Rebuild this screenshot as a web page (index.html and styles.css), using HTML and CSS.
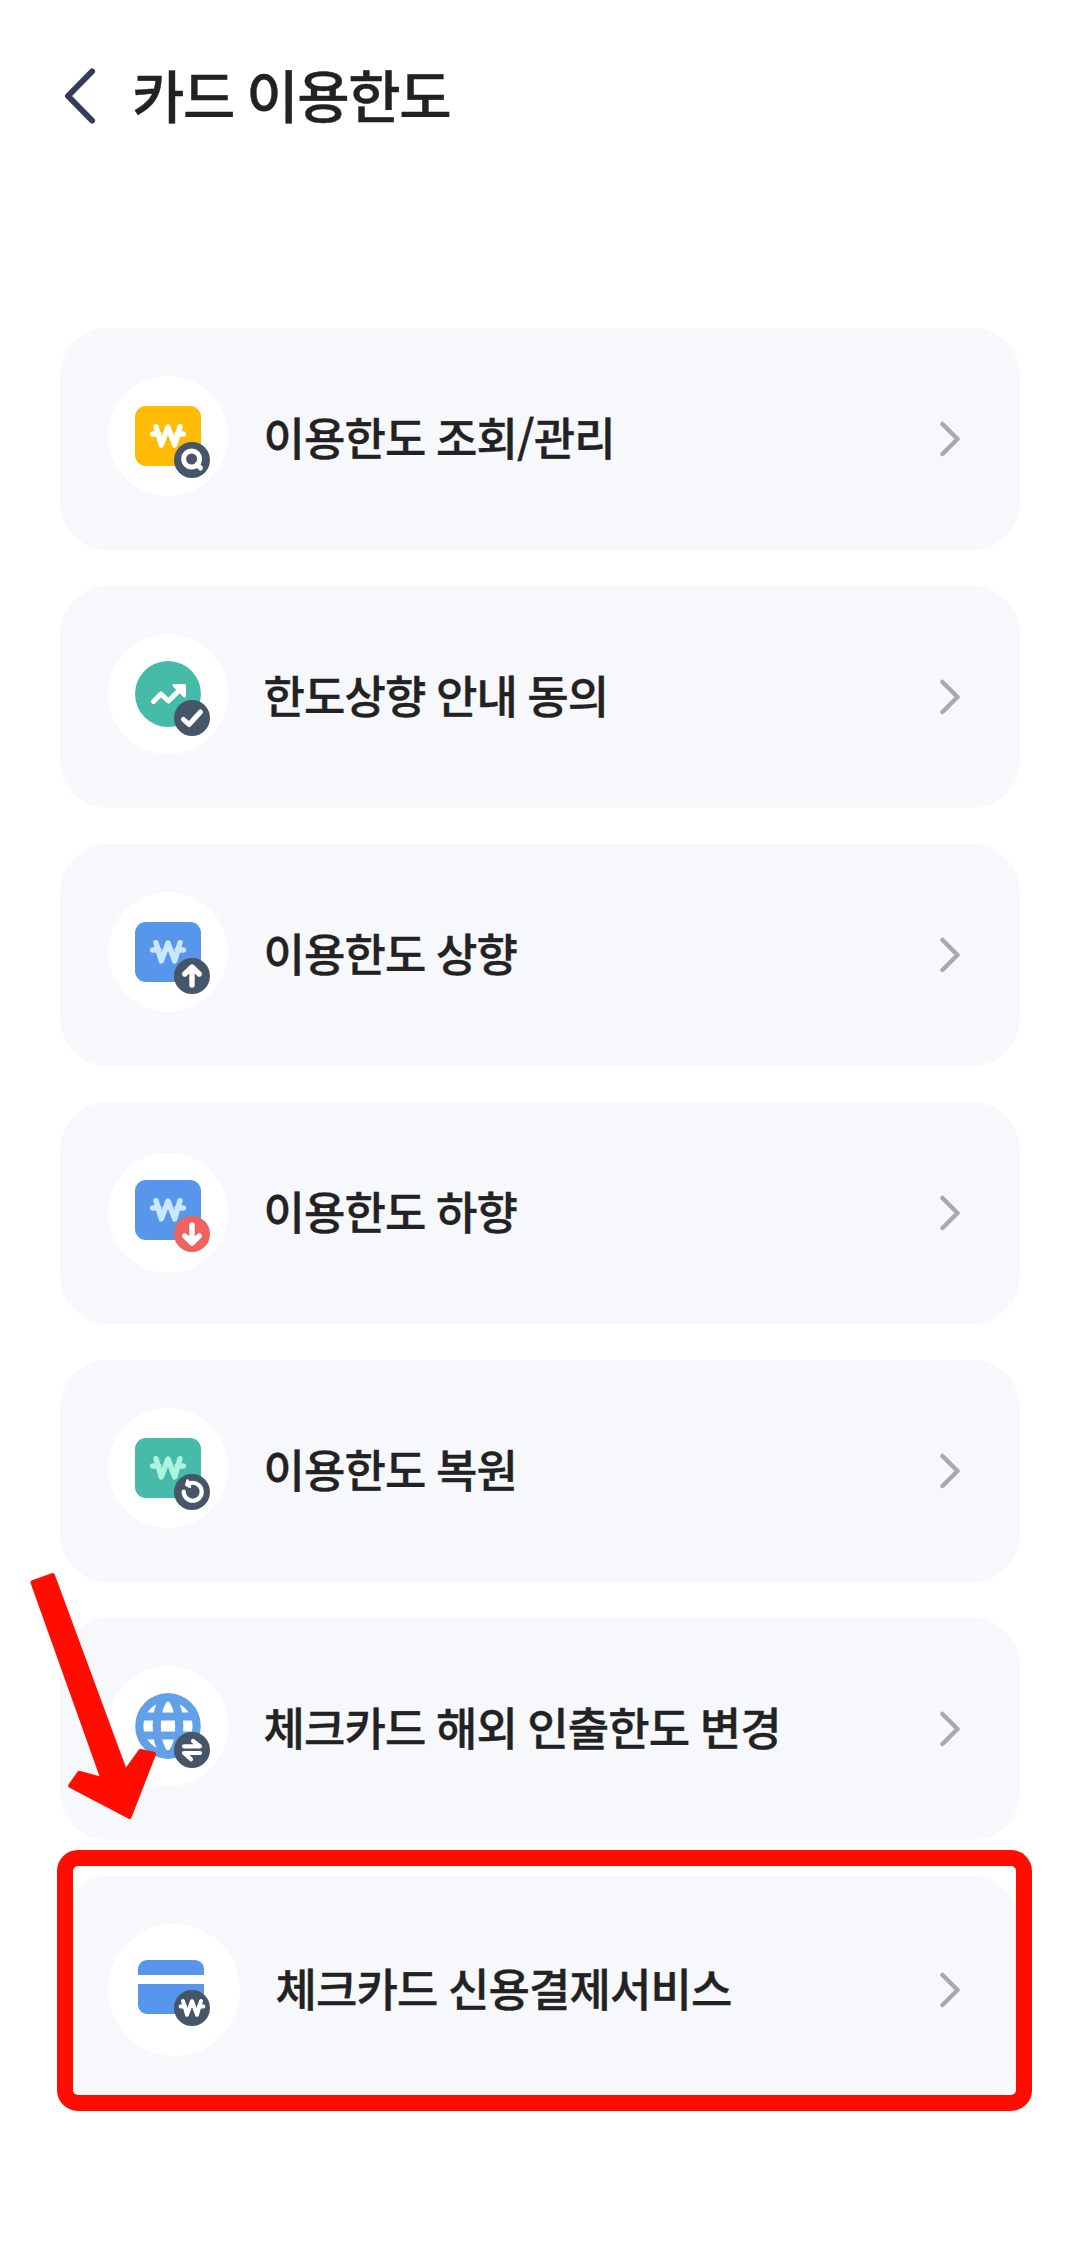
FILE: index.html
```
<!DOCTYPE html>
<html lang="ko">
<head>
<meta charset="utf-8">
<title>카드 이용한도</title>
<link rel="stylesheet" href="styles.css">
</head>
<body>
<svg class="defs" width="0" height="0" aria-hidden="true">
  <symbol id="won" viewBox="0 0 36 24"><path d="M6 2.7 11.3 21 18 3 24.7 21 30 2.7M2.6 10H9M27 10h6.4"/></symbol>
  <symbol id="chevron" viewBox="0 0 20 36"><path d="M2.5 3 17.5 18 2.5 33"/></symbol>
</svg>
<main class="screen">
  <header class="header">
    <svg class="back" viewBox="0 0 32 56"><path d="M28 3.5 4 28 28 52.5"/></svg>
    <h1 class="title">카드 이용한도</h1>
  </header>

  <ul class="menu">
    <li class="card">
      <svg class="icon" viewBox="0 0 120 126">
        <circle class="white" cx="60" cy="60" r="60"/>
        <rect class="yellow" x="27" y="30" width="66" height="60" rx="11"/>
        <use class="won" href="#won" x="42" y="48" width="36" height="24"/>
        <circle class="navy" cx="84" cy="84" r="18"/>
        <g class="mark"><circle cx="83.6" cy="83" r="8"/><path d="m89 88.500 3.500 3.500"/></g>
      </svg>
      <span class="label">이용한도 조회/관리</span>
      <svg class="chevron"><use href="#chevron"/></svg>
    </li>
    <li class="card">
      <svg class="icon" viewBox="0 0 120 126">
        <circle class="white" cx="60" cy="60" r="60"/>
        <circle class="green" cx="60" cy="60" r="33"/>
        <path class="mark" d="m45.500 67.500 7.500-7.500 7.500 7 14-14"/>
        <path class="head" d="M66 51.500H76.500V62Z"/>
        <circle class="navy" cx="84" cy="84" r="18"/>
        <path class="mark" d="m75.500 85.500 5.500 5 11.500-12.500"/>
      </svg>
      <span class="label">한도상향 안내 동의</span>
      <svg class="chevron"><use href="#chevron"/></svg>
    </li>
    <li class="card">
      <svg class="icon" viewBox="0 0 120 126">
        <circle class="white" cx="60" cy="60" r="60"/>
        <rect class="blue" x="27" y="30" width="66" height="60" rx="11"/>
        <use class="won won-blue" href="#won" x="42" y="48" width="36" height="24"/>
        <circle class="navy" cx="84" cy="84" r="18"/>
        <path class="mark mark-bold" d="M84 93V75.500M76.800 82 84 75l7.200 7"/>
      </svg>
      <span class="label">이용한도 상향</span>
      <svg class="chevron"><use href="#chevron"/></svg>
    </li>
    <li class="card">
      <svg class="icon" viewBox="0 0 120 126">
        <circle class="white" cx="60" cy="63" r="60"/>
        <rect class="blue" x="27" y="30" width="66" height="60" rx="11"/>
        <use class="won won-blue" href="#won" x="42" y="48" width="36" height="24"/>
        <circle class="red" cx="84" cy="84" r="18"/>
        <path class="mark mark-bold" d="M84 75v17.500M76.800 86 84 93l7.200-7"/>
      </svg>
      <span class="label">이용한도 하향</span>
      <svg class="chevron"><use href="#chevron"/></svg>
    </li>
    <li class="card">
      <svg class="icon" viewBox="0 0 120 126">
        <circle class="white" cx="60" cy="60" r="60"/>
        <rect class="green" x="27" y="30" width="66" height="60" rx="11"/>
        <use class="won won-green" href="#won" x="42" y="48" width="36" height="24"/>
        <circle class="navy" cx="84" cy="84" r="18"/>
        <path class="mark mark-thin" d="M75.700 83.500A9 9 0 1 0 84 74.800L81 75"/>
        <path class="head head-small" d="M79.500 72.500 78.300 76.800 82 78.800Z"/>
      </svg>
      <span class="label">이용한도 복원</span>
      <svg class="chevron"><use href="#chevron"/></svg>
    </li>
    <li class="card">
      <svg class="icon" viewBox="0 0 120 126">
        <circle class="white" cx="60" cy="60" r="60"/>
        <g class="globe"><circle cx="60" cy="60" r="28.700"/><ellipse cx="60" cy="60" rx="11.200" ry="28.700"/><path d="M34 50.500h52M34 69.500h52"/></g>
        <circle class="navy" cx="84" cy="84" r="18"/>
        <path class="mark mark-thin" d="M76 80.300H92L85 75M92 87H76l7 6.300"/>
      </svg>
      <span class="label">체크카드 해외 인출한도 변경</span>
      <svg class="chevron"><use href="#chevron"/></svg>
    </li>
    <li class="card">
      <svg class="icon icon-large" viewBox="0 0 132 132">
        <circle class="white" cx="66" cy="66" r="66"/>
        <rect class="blue" x="30" y="36" width="66" height="54" rx="9"/>
        <path class="white" d="M29 51h68v9H29z"/>
        <circle class="navy" cx="84" cy="84" r="18"/>
        <use class="won won-badge" href="#won" x="70.500" y="74.500" width="27" height="19"/>
      </svg>
      <span class="label">체크카드 신용결제서비스</span>
      <svg class="chevron"><use href="#chevron"/></svg>
    </li>
  </ul>

  <div class="highlight"></div>
  <svg class="pointer" viewBox="0 0 130 250"><path d="M13 12.500 32.500 5.500 105.300 202.800 120.600 181.500 133.400 184.300 109.300 246.300 50.700 215.600 59.600 203.300 83.500 210Z"/></svg>
</main>
</body>
</html>
```
FILE: styles.css
```
* { box-sizing: border-box; }

body {
  margin: 0;
  background: #fff;
  color: #222;
  font-family: "Noto Sans CJK KR", sans-serif;
  font-weight: 500;
  -webkit-text-stroke: 0.4px #222;
}

svg { display: block; overflow: visible; }
.defs { position: absolute; }

.screen {
  position: relative;
  height: 2260px;
  padding: 0 60px;
}

.header {
  display: flex;
  align-items: center;
  height: 192px;
  padding-left: 4px;
}

.back {
  width: 32px;
  height: 56px;
  fill: none;
  stroke: #303d5c;
  stroke-width: 6;
  stroke-linecap: round;
  stroke-linejoin: round;
}

.title {
  margin: 0 0 0 36px;
  padding-bottom: 6px;
  font-size: 57px;
  font-weight: 500;
  line-height: 84px;
  letter-spacing: -1.4px;
  word-spacing: -2.5px;
}

.menu {
  display: flex;
  flex-direction: column;
  gap: 36px;
  margin: 136px 0 0;
  padding: 0;
  list-style: none;
}

.card {
  display: flex;
  align-items: center;
  padding: 48px 60px 48px 48px;
  border-radius: 48px;
  background: #f7f8fc;
}

.icon { width: 120px; height: 126px; flex: none; }
.icon-large { width: 132px; height: 132px; }

.label {
  flex: 1;
  margin-left: 35.5px;
  padding-bottom: 5px;
  font-size: 45px;
  line-height: 66px;
  letter-spacing: -0.02em;
  word-spacing: -1.3px;
  white-space: nowrap;
}

.chevron {
  width: 20px;
  height: 36px;
  fill: none;
  stroke: #aaa;
  stroke-width: 4.5;
  stroke-linecap: round;
  stroke-linejoin: round;
}

.white { fill: #fff; }
.yellow { fill: #ffbb05; }
.green { fill: #45bba8; }
.blue { fill: #5796ea; }
.navy { fill: #465568; }
.red { fill: #f0625d; }

.won, .mark, .globe {
  fill: none;
  stroke: #fff;
  stroke-width: 5;
  stroke-linecap: round;
  stroke-linejoin: round;
}
.won { stroke-width: 5.4; }
.won-blue { stroke: #c9e7ff; }
.won-green { stroke: #aef3dc; }
.mark-bold { stroke-width: 5.4; }
.mark-thin { stroke-width: 4.2; }
.globe { stroke: #62a1e8; stroke-width: 8.2; stroke-linecap: butt; }
.head { fill: #fff; stroke: #fff; stroke-width: 3; stroke-linejoin: round; }
.head-small { stroke-width: 2.5; }

/* Marker annotations drawn over the list */
.highlight {
  position: absolute;
  left: 57px;
  top: 1850px;
  width: 975px;
  height: 261px;
  border: 16px solid #ff0d00;
  border-radius: 21px;
}

.pointer {
  position: absolute;
  left: 20px;
  top: 1570px;
  width: 130px;
  height: 250px;
  fill: #ff0d00;
  stroke: #ff0d00;
  stroke-width: 5;
  stroke-linejoin: round;
}
```
